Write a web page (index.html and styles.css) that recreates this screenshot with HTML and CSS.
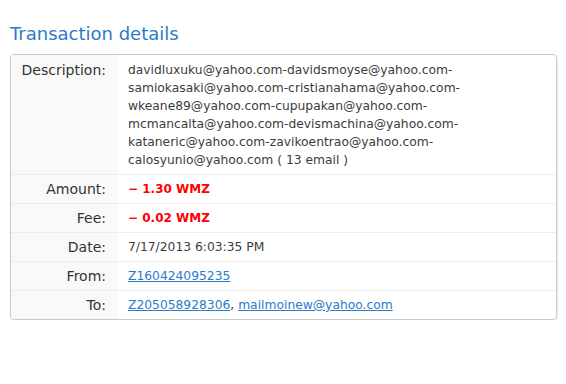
FILE: index.html
```html
<!DOCTYPE html>
<html lang="en">
<head>
  <meta charset="UTF-8" />
  <title>Transaction details</title>
  <link rel="stylesheet" href="styles.css">
</head>
<body>
  <div class="page">
    <h2 class="title">Transaction details</h2>

    <table class="details">
      <tr>
        <th>Description:</th>
        <td>davidluxuku@yahoo.com-davidsmoyse@yahoo.com-<br>samiokasaki@yahoo.com-cristianahama@yahoo.com-<br>wkeane89@yahoo.com-cupupakan@yahoo.com-<br>mcmancalta@yahoo.com-devismachina@yahoo.com-<br>kataneric@yahoo.com-zavikoentrao@yahoo.com-<br>calosyunio@yahoo.com ( 13 email )</td>
      </tr>
      <tr>
        <th>Amount:</th>
        <td><span class="money">&minus; 1.30 WMZ</span></td>
      </tr>
      <tr>
        <th>Fee:</th>
        <td><span class="money">&minus; 0.02 WMZ</span></td>
      </tr>
      <tr>
        <th>Date:</th>
        <td>7/17/2013 6:03:35 PM</td>
      </tr>
      <tr>
        <th>From:</th>
        <td><a href="#">Z160424095235</a></td>
      </tr>
      <tr>
        <th>To:</th>
        <td><a href="#">Z205058928306</a>, <a href="#">mailmoinew@yahoo.com</a></td>
      </tr>
    </table>
  </div>
</body>
</html>
```

FILE: styles.css
```css
body {
  margin: 0;
  font-family: "DejaVu Sans", Verdana, sans-serif;
  font-size: 12px;
  color: #333;
  background: #fff;
}

.page {
  padding: 22px 9px 0 10px;
}

.title {
  margin: 0 0 8px;
  font-size: 18px;
  font-weight: normal;
  color: #2b7bc9;
  line-height: 24px;
}

.details {
  width: 100%;
  border-collapse: separate;
  border-spacing: 0;
  border: 1px solid #c9c9c9;
  border-radius: 4px;
  box-shadow: 1px 1px 1px rgba(0, 0, 0, 0.08);
  overflow: hidden;
}

.details th,
.details td {
  padding: 5px 10px 5px;
  line-height: 18px;
  vertical-align: top;
  border-top: 1px solid #ededed;
}

.details tr:first-child th,
.details tr:first-child td {
  border-top: none;
  padding-top: 6px;
}

.details th {
  width: 85px;
  text-align: right;
  font-size: 14px;
  font-weight: normal;
  background: #f9f9f9;
  padding-right: 12px;
}

.details td {
  font-size: 12.3px;
  color: #3c3c3c;
  padding-left: 10px;
}

.money {
  font-size: 12px;
  color: #f00;
  font-weight: bold;
}

.details a {
  color: #2b7bc9;
}
```
